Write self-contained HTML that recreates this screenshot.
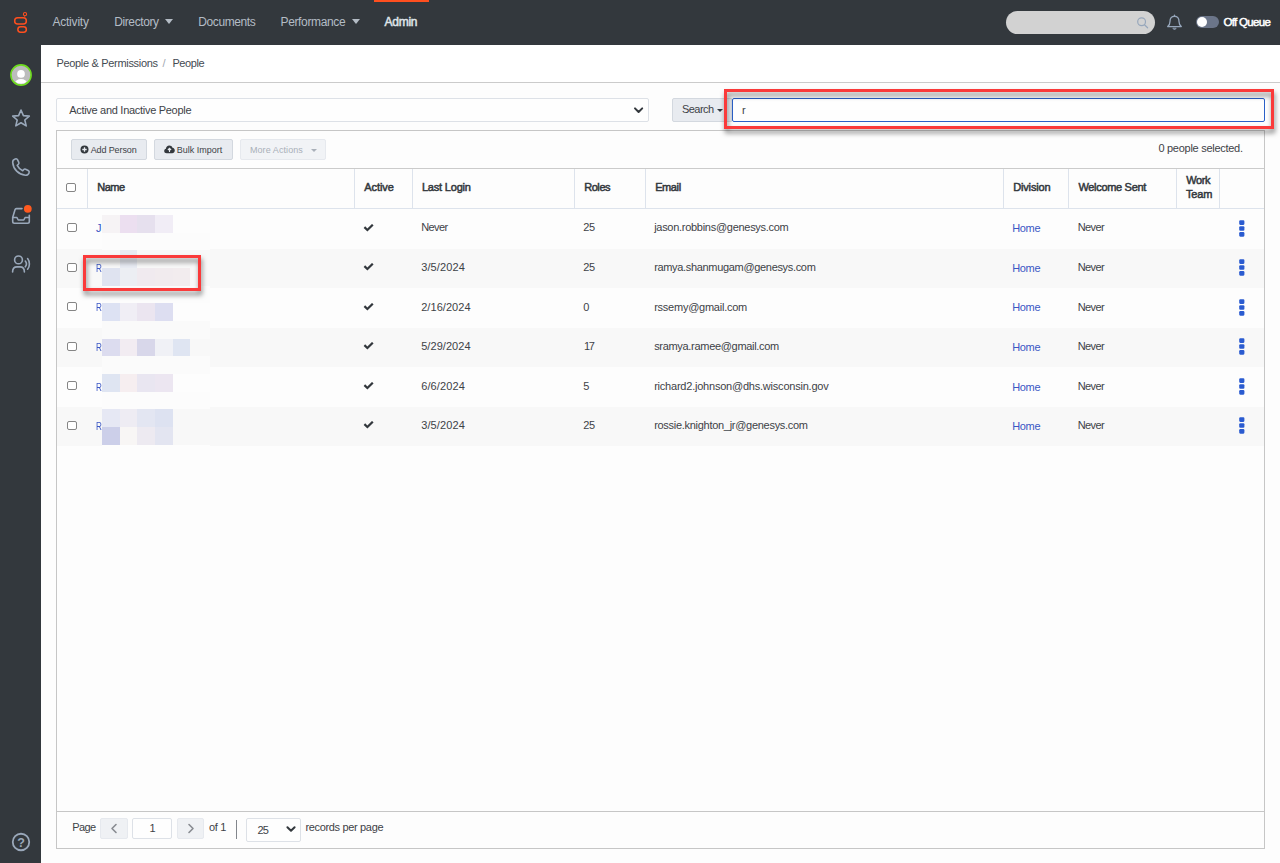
<!DOCTYPE html>
<html lang="en">
<head>
<meta charset="utf-8">
<title>People</title>
<style>
*{box-sizing:border-box;margin:0;padding:0}
html,body{width:1280px;height:863px;overflow:hidden;background:#fdfdfd;font-family:"Liberation Sans",Arial,sans-serif;color:#3d4247;font-size:12px}
.a{position:absolute}
.t{position:absolute;white-space:pre;line-height:14px;font-size:12px}
#side{left:0;top:0;width:41px;height:863px;background:#33383d}
#top{left:0;top:0;width:1280px;height:45px;background:#33383d}
#crumb{left:41px;top:45px;width:1239px;height:38px;background:#fff;border-bottom:1px solid #cbcbcb}
.caret{width:0;height:0;border-left:4.5px solid transparent;border-right:4.5px solid transparent;border-top:5px solid #b4bcc5}
.btn{background:#e8ebf0;border:1px solid #d3d8df;border-radius:2px}
.btn.dis{background:#f1f3f6;border-color:#e6e9ee}
.stripe{left:57px;width:1207px;height:39.5px;background:#f8f8f8}
.vl{width:1px;top:169px;height:39px;background:#dde3ec}
.cb{left:67px;width:9.6px;height:9.4px;border:1px solid #858585;border-radius:2px;background:#fff}
.px{position:absolute}
.red{border:3px solid #fa3a3a;filter:drop-shadow(1px 4px 2.5px rgba(0,0,0,.5))}
.dots{left:1239px;width:6px;height:17px}
.chk{left:363px;width:11px;height:9px}
</style>
</head>
<body>
<div id="top" class="a"></div>
<div id="side" class="a"></div>

<!-- active tab bar -->
<div class="a" style="left:374px;top:0;width:55px;height:2px;background:#ff4f1f"></div>
<div class="a caret" style="left:165px;top:19px"></div>
<div class="a caret" style="left:352px;top:19px"></div>

<!-- logo -->
<svg class="a" style="left:10px;top:9px" width="22" height="27" viewBox="10 9 22 27" fill="none" stroke="#ff4f1f" stroke-width="1.5">
<circle cx="25" cy="14.15" r="1.6" stroke-width="1.1"/>
<rect x="14.65" y="17.85" width="11.7" height="6.1" rx="3.05"/>
<rect x="17.85" y="26.75" width="8.5" height="5.4" rx="2.7"/>
<path d="M24.6 16 L24.8 17.2" stroke-width="0.7"/>
</svg>

<!-- avatar -->
<svg class="a" style="left:9px;top:63px" width="24" height="24" viewBox="0 0 24 24">
<defs><clipPath id="avc"><circle cx="12" cy="12" r="8.7"/></clipPath></defs>
<circle cx="12" cy="12" r="10.1" fill="#bcbcbc" stroke="#6fdc1f" stroke-width="1.6"/>
<g clip-path="url(#avc)" fill="#fff"><circle cx="12" cy="10.9" r="3.85"/><ellipse cx="12" cy="20.6" rx="6.3" ry="4.5"/></g>
</svg>

<!-- sidebar icons -->
<svg class="a" style="left:11px;top:108px" width="20" height="20" viewBox="11 108 20 20" fill="none" stroke="#9aa8ba" stroke-width="1.6" stroke-linejoin="round">
<path d="M21 110 L23.4 115.6 L29.3 116.1 L24.8 120 L26.2 125.9 L21 122.8 L15.8 125.9 L17.2 120 L12.7 116.1 L18.6 115.6 Z"/>
</svg>
<svg class="a" style="left:11px;top:157px" width="20" height="20" viewBox="11 157 20 20" fill="none" stroke="#9aa8ba" stroke-width="1.6" stroke-linecap="round" stroke-linejoin="round">
<path d="M15.2 158.9 C13.6 159.4 12.6 160.8 12.7 162.4 C13.2 169.2 18.6 174.6 25.4 175.2 C27 175.3 28.6 174.3 29.1 172.7 C29.4 171.8 29 170.9 28.2 170.5 L25.6 169.2 C24.9 168.9 24.1 169.1 23.6 169.7 L22.7 170.8 C20.4 169.7 18.4 167.7 17.2 165.3 L18.3 164.4 C18.9 163.9 19.1 163.1 18.8 162.4 L17.6 159.8 C17.2 158.9 16.1 158.6 15.2 158.9 Z"/>
</svg>
<svg class="a" style="left:11px;top:203px" width="24" height="23" viewBox="11 203 24 23" fill="none" stroke="#9aa8ba" stroke-width="1.6" stroke-linecap="round" stroke-linejoin="round">
<path d="M22 208.6 L16.4 208.6 C15.7 208.6 15.2 209 15 209.7 L12.7 217.4 L12.7 221.6 C12.7 222.6 13.4 223.3 14.4 223.3 L27.6 223.3 C28.6 223.3 29.3 222.6 29.3 221.6 L29.3 215.2"/>
<path d="M12.7 217.5 L16.9 217.5 L18.2 220 L23.8 220 L25.1 217.5 L29.3 217.5"/>
<circle cx="27.8" cy="208.8" r="3.9" fill="#ff5a1f" stroke="none"/>
</svg>
<svg class="a" style="left:11px;top:254px" width="21" height="20" viewBox="11 254 21 20" fill="none" stroke="#9aa8ba" stroke-width="1.6" stroke-linecap="round">
<circle cx="18.5" cy="259.9" r="3.9"/>
<path d="M12.6 272 C12.6 268.8 14.6 266.9 17 266.9 L20 266.9 C22.4 266.9 24.4 268.8 24.4 272"/>
<path d="M25.3 261 C26.6 262.6 26.6 265.2 25.3 266.8"/>
<path d="M27.6 258.6 C30 261.6 30 266.3 27.6 269.2"/>
</svg>
<svg class="a" style="left:11px;top:832px" width="20" height="20" viewBox="0 0 20 20">
<circle cx="10" cy="10" r="8.25" fill="none" stroke="#9aa8ba" stroke-width="1.8"/>
<text x="10" y="14.5" text-anchor="middle" font-family="Liberation Sans,Arial,sans-serif" font-weight="bold" font-size="12.5" fill="#9aa8ba">?</text>
</svg>

<!-- top right -->
<div class="a" style="left:1006px;top:11px;width:149px;height:23px;border-radius:12px;background:#d2d2d2"></div>
<svg class="a" style="left:1136px;top:16px" width="14" height="14" viewBox="1136 16 14 14" fill="none" stroke="#97a7bc" stroke-width="1.2" stroke-linecap="round">
<circle cx="1141.6" cy="21.8" r="3.9"/><path d="M1144.5 24.8 L1147.6 27.8"/>
</svg>
<svg class="a" style="left:1166px;top:13px" width="18" height="19" viewBox="1166 13 18 19" fill="none" stroke="#97a7bc" stroke-width="1.3" stroke-linecap="round" stroke-linejoin="round">
<path d="M1174.5 16.4 C1171.3 16.4 1170 18.9 1170 21.4 C1170 24.2 1169.2 25.3 1167.7 26.6 L1181.3 26.6 C1179.8 25.3 1179 24.2 1179 21.4 C1179 18.9 1177.7 16.4 1174.5 16.4 Z"/>
<path d="M1174.5 15.2 L1174.5 16.2"/><path d="M1172.9 28.5 A1.7 1.5 0 0 0 1176.1 28.5 Z" fill="#97a7bc" stroke-width="0.6"/>
</svg>
<div class="a" style="left:1196px;top:16px;width:23px;height:12px;border-radius:6px;background:#6b7589"></div>
<div class="a" style="left:1196.6px;top:16.9px;width:10.2px;height:10.2px;border-radius:6px;background:#fff"></div>

<!-- breadcrumb -->
<div id="crumb" class="a"></div>

<!-- filter row -->
<div class="a" style="left:56px;top:98px;width:593px;height:24px;border:1px solid #dde1e7;border-radius:2px;background:#fefefe"></div>
<svg class="a" style="left:632px;top:105px" width="14" height="10" viewBox="632 105 14 10" fill="none" stroke="#33383d" stroke-width="2" stroke-linecap="round" stroke-linejoin="round"><path d="M635 108.4 L638.6 112 L642.2 108.4"/></svg>
<div class="a btn" style="left:672px;top:98px;width:60px;height:24px;border-radius:2px 0 0 2px"></div>
<div class="a" style="left:717px;top:109px;width:0;height:0;border-left:3px solid transparent;border-right:3px solid transparent;border-top:3.5px solid #33383d"></div>
<div class="a" style="left:732px;top:98px;width:533px;height:24px;border:1px solid #2a60c8;border-radius:2px;background:#fefefe"></div>

<!-- panel -->
<div class="a" style="left:56px;top:130px;width:1209px;height:719px;border:1px solid #c6c6c6"></div>
<div class="a btn" style="left:71px;top:139px;width:76px;height:21px"></div>
<div class="a btn" style="left:154px;top:139px;width:79px;height:21px"></div>
<div class="a btn dis" style="left:240px;top:139px;width:86px;height:21px"></div>
<svg class="a" style="left:80px;top:145px" width="9" height="9" viewBox="0 0 9 9"><circle cx="4.5" cy="4.5" r="4" fill="#33383d"/><path d="M4.5 2.3V6.7M2.3 4.5H6.7" stroke="#e8ebf0" stroke-width="1.3"/></svg>
<svg class="a" style="left:164px;top:145px" width="11" height="9" viewBox="0 0 11 9"><path d="M2.7 8.3 C1.2 8.3 0.2 7.3 0.2 6 C0.2 4.9 0.9 4.1 1.9 3.8 C2 2 3.4 0.6 5.3 0.6 C6.8 0.6 8 1.5 8.5 2.8 C9.9 3 10.8 4.1 10.8 5.5 C10.8 7.1 9.6 8.3 8.1 8.3 Z" fill="#33383d"/><path d="M5.5 7V3.6M3.9 5L5.5 3.4L7.1 5" stroke="#e8ebf0" stroke-width="1.1" fill="none"/></svg>
<div class="a" style="left:310.5px;top:149px;width:0;height:0;border-left:3px solid transparent;border-right:3px solid transparent;border-top:3.5px solid #a9b0b9"></div>

<!-- header -->
<div class="a" style="left:57px;top:168px;width:1207px;height:1px;background:#cbcbcb"></div>
<div class="a" style="left:57px;top:208px;width:1207px;height:1px;background:#dde3ec"></div>
<div class="a vl" style="left:87px"></div>
<div class="a vl" style="left:354px"></div>
<div class="a vl" style="left:412px"></div>
<div class="a vl" style="left:574px"></div>
<div class="a vl" style="left:645px"></div>
<div class="a vl" style="left:1003px"></div>
<div class="a vl" style="left:1068px"></div>
<div class="a vl" style="left:1176px"></div>
<div class="a vl" style="left:1219px"></div>
<div class="a cb" style="left:66.2px;top:182.7px"></div>

<!-- rows -->
<div class="a stripe" style="top:248.5px"></div>
<div class="a stripe" style="top:327.5px"></div>
<div class="a stripe" style="top:406.5px"></div>
<div class="px" style="left:102px;top:232.66px;width:108px;height:17.66px;background:#fcfcfc"></div>
<div class="px" style="left:102px;top:285.64px;width:108px;height:17.66px;background:#fcfcfc"></div>
<div class="px" style="left:102px;top:320.96px;width:108px;height:17.66px;background:#fafafa"></div>
<div class="px" style="left:102px;top:356.28px;width:108px;height:17.66px;background:#fbfbfb"></div>
<div class="px" style="left:102px;top:391.60px;width:108px;height:17.66px;background:#fcfcfc"></div>
<div class="px" style="left:102px;top:444.58px;width:108px;height:17.66px;background:#fdfdfd"></div>
<div class="px" style="left:102px;top:215.00px;width:18px;height:17.66px;background:#f6f3f5"></div>
<div class="px" style="left:120px;top:215.00px;width:17px;height:17.66px;background:#ecdff0"></div>
<div class="px" style="left:137px;top:215.00px;width:18px;height:17.66px;background:#e6e0ee"></div>
<div class="px" style="left:155px;top:215.00px;width:18px;height:17.66px;background:#f1edf6"></div>
<div class="px" style="left:120px;top:250.32px;width:17px;height:17.66px;background:#e8ebf3"></div>
<div class="px" style="left:102px;top:267.98px;width:18px;height:17.66px;background:#dfe3f0"></div>
<div class="px" style="left:120px;top:267.98px;width:17px;height:17.66px;background:#eceef3"></div>
<div class="px" style="left:137px;top:267.98px;width:18px;height:17.66px;background:#f0eaef"></div>
<div class="px" style="left:155px;top:267.98px;width:18px;height:17.66px;background:#f1ebee"></div>
<div class="px" style="left:173px;top:267.98px;width:17px;height:17.66px;background:#f2ecee"></div>
<div class="px" style="left:102px;top:303.30px;width:18px;height:17.66px;background:#dde2f3"></div>
<div class="px" style="left:120px;top:303.30px;width:17px;height:17.66px;background:#f0eef5"></div>
<div class="px" style="left:137px;top:303.30px;width:18px;height:17.66px;background:#ebe5f0"></div>
<div class="px" style="left:155px;top:303.30px;width:18px;height:17.66px;background:#dddef1"></div>
<div class="px" style="left:102px;top:338.62px;width:18px;height:17.66px;background:#dcdcef"></div>
<div class="px" style="left:120px;top:338.62px;width:17px;height:17.66px;background:#f2ecf2"></div>
<div class="px" style="left:137px;top:338.62px;width:18px;height:17.66px;background:#d8d7ea"></div>
<div class="px" style="left:155px;top:338.62px;width:18px;height:17.66px;background:#f0f1f6"></div>
<div class="px" style="left:173px;top:338.62px;width:17px;height:17.66px;background:#dfe5f2"></div>
<div class="px" style="left:102px;top:373.94px;width:18px;height:17.66px;background:#dfe5f2"></div>
<div class="px" style="left:120px;top:373.94px;width:17px;height:17.66px;background:#f6eef0"></div>
<div class="px" style="left:137px;top:373.94px;width:18px;height:17.66px;background:#e9e6f1"></div>
<div class="px" style="left:155px;top:373.94px;width:18px;height:17.66px;background:#ece6f1"></div>
<div class="px" style="left:102px;top:409.26px;width:18px;height:17.66px;background:#e6e8f4"></div>
<div class="px" style="left:120px;top:409.26px;width:17px;height:17.66px;background:#eeecf3"></div>
<div class="px" style="left:137px;top:409.26px;width:18px;height:17.66px;background:#e3e6f2"></div>
<div class="px" style="left:155px;top:409.26px;width:18px;height:17.66px;background:#dde2f1"></div>
<div class="px" style="left:102px;top:426.92px;width:18px;height:17.66px;background:#cccfe9"></div>
<div class="px" style="left:120px;top:426.92px;width:17px;height:17.66px;background:#f8f6f5"></div>
<div class="px" style="left:137px;top:426.92px;width:18px;height:17.66px;background:#edeaf1"></div>
<div class="px" style="left:155px;top:426.92px;width:18px;height:17.66px;background:#e3e5f1"></div>
<div class="a cb" style="top:223.0px"></div>
<svg class="a chk" style="top:223.5px" viewBox="0 0 11 9"><path d="M1.4 3.1 L4.4 6.0 L9.8 0.7" fill="none" stroke="#33383d" stroke-width="2.2"/></svg>
<svg class="a dots" style="top:219.8px" viewBox="0 0 6 17" fill="#2a5bd0"><rect x="0.2" y="0.3" width="5.2" height="4.6" rx="1.1"/><rect x="0.2" y="6.2" width="5.2" height="4.6" rx="1.1"/><rect x="0.2" y="12.1" width="5.2" height="4.6" rx="1.1"/></svg>
<div class="a cb" style="top:262.5px"></div>
<svg class="a chk" style="top:263.0px" viewBox="0 0 11 9"><path d="M1.4 3.1 L4.4 6.0 L9.8 0.7" fill="none" stroke="#33383d" stroke-width="2.2"/></svg>
<svg class="a dots" style="top:259.3px" viewBox="0 0 6 17" fill="#2a5bd0"><rect x="0.2" y="0.3" width="5.2" height="4.6" rx="1.1"/><rect x="0.2" y="6.2" width="5.2" height="4.6" rx="1.1"/><rect x="0.2" y="12.1" width="5.2" height="4.6" rx="1.1"/></svg>
<div class="a cb" style="top:302.0px"></div>
<svg class="a chk" style="top:302.5px" viewBox="0 0 11 9"><path d="M1.4 3.1 L4.4 6.0 L9.8 0.7" fill="none" stroke="#33383d" stroke-width="2.2"/></svg>
<svg class="a dots" style="top:298.8px" viewBox="0 0 6 17" fill="#2a5bd0"><rect x="0.2" y="0.3" width="5.2" height="4.6" rx="1.1"/><rect x="0.2" y="6.2" width="5.2" height="4.6" rx="1.1"/><rect x="0.2" y="12.1" width="5.2" height="4.6" rx="1.1"/></svg>
<div class="a cb" style="top:341.5px"></div>
<svg class="a chk" style="top:342.0px" viewBox="0 0 11 9"><path d="M1.4 3.1 L4.4 6.0 L9.8 0.7" fill="none" stroke="#33383d" stroke-width="2.2"/></svg>
<svg class="a dots" style="top:338.3px" viewBox="0 0 6 17" fill="#2a5bd0"><rect x="0.2" y="0.3" width="5.2" height="4.6" rx="1.1"/><rect x="0.2" y="6.2" width="5.2" height="4.6" rx="1.1"/><rect x="0.2" y="12.1" width="5.2" height="4.6" rx="1.1"/></svg>
<div class="a cb" style="top:381.0px"></div>
<svg class="a chk" style="top:381.5px" viewBox="0 0 11 9"><path d="M1.4 3.1 L4.4 6.0 L9.8 0.7" fill="none" stroke="#33383d" stroke-width="2.2"/></svg>
<svg class="a dots" style="top:377.8px" viewBox="0 0 6 17" fill="#2a5bd0"><rect x="0.2" y="0.3" width="5.2" height="4.6" rx="1.1"/><rect x="0.2" y="6.2" width="5.2" height="4.6" rx="1.1"/><rect x="0.2" y="12.1" width="5.2" height="4.6" rx="1.1"/></svg>
<div class="a cb" style="top:420.5px"></div>
<svg class="a chk" style="top:421.0px" viewBox="0 0 11 9"><path d="M1.4 3.1 L4.4 6.0 L9.8 0.7" fill="none" stroke="#33383d" stroke-width="2.2"/></svg>
<svg class="a dots" style="top:417.3px" viewBox="0 0 6 17" fill="#2a5bd0"><rect x="0.2" y="0.3" width="5.2" height="4.6" rx="1.1"/><rect x="0.2" y="6.2" width="5.2" height="4.6" rx="1.1"/><rect x="0.2" y="12.1" width="5.2" height="4.6" rx="1.1"/></svg>

<!-- footer -->
<div class="a" style="left:57px;top:811px;width:1207px;height:1px;background:#c6c6c6"></div>
<div class="a btn" style="left:100px;top:818px;width:28px;height:21px;background:#eff1f4;border-color:#e6e9ee"></div>
<div class="a" style="left:132px;top:818px;width:40px;height:21px;border:1px solid #dde1e7;border-radius:2px;background:#fefefe"></div>
<div class="a btn" style="left:177px;top:818px;width:27px;height:21px;background:#eff1f4;border-color:#e6e9ee"></div>
<svg class="a" style="left:109px;top:823px" width="10" height="11" viewBox="0 0 10 11" fill="none" stroke="#888b91" stroke-width="1.6" stroke-linecap="round" stroke-linejoin="round"><path d="M7 1.5 L3 5.5 L7 9.5"/></svg>
<svg class="a" style="left:186px;top:823px" width="10" height="11" viewBox="0 0 10 11" fill="none" stroke="#888b91" stroke-width="1.6" stroke-linecap="round" stroke-linejoin="round"><path d="M3 1.5 L7 5.5 L3 9.5"/></svg>
<div class="a" style="left:236px;top:820px;width:1px;height:19px;background:#82868c"></div>
<div class="a" style="left:246px;top:818px;width:55px;height:23.5px;border:1px solid #dde1e7;border-radius:2px;background:#fefefe"></div>
<svg class="a" style="left:284px;top:824px" width="14" height="10" viewBox="0 0 14 10" fill="none" stroke="#33383d" stroke-width="2" stroke-linecap="round" stroke-linejoin="round"><path d="M3.4 3.2 L7 6.8 L10.6 3.2"/></svg>

<div class="t" style="left:52.40px;top:14.50px;color:#b4bcc5;letter-spacing:-0.202px;">Activity</div>
<div class="t" style="left:114.20px;top:14.50px;color:#b4bcc5;letter-spacing:-0.390px;">Directory</div>
<div class="t" style="left:198.30px;top:14.50px;color:#b4bcc5;letter-spacing:-0.412px;">Documents</div>
<div class="t" style="left:280.50px;top:14.50px;color:#b4bcc5;letter-spacing:-0.353px;">Performance</div>
<div class="t" style="left:384.60px;top:14.50px;-webkit-text-stroke:0.5px;color:#dfe3e8;letter-spacing:-0.270px;">Admin</div>
<div class="t" style="left:1223.50px;top:14.80px;font-size:11.5px;-webkit-text-stroke:0.5px;color:#ffffff;letter-spacing:-0.689px;">Off Queue</div>
<div class="t" style="left:56.40px;top:55.50px;font-size:11px;color:#444a52;letter-spacing:-0.313px;">People &amp; Permissions</div>
<div class="t" style="left:162.40px;top:55.50px;font-size:11px;color:#a0a7b0;">/</div>
<div class="t" style="left:172.40px;top:55.50px;font-size:11px;color:#444a52;letter-spacing:-0.412px;">People</div>
<div class="t" style="left:69.15px;top:102.50px;font-size:11px;letter-spacing:-0.290px;">Active and Inactive People</div>
<div class="t" style="left:681.90px;top:102.00px;font-size:11px;letter-spacing:-0.520px;">Search</div>
<div class="t" style="left:741.90px;top:103.10px;font-size:11px;">r</div>
<div class="t" style="left:90.65px;top:143.20px;font-size:9px;letter-spacing:-0.109px;">Add Person</div>
<div class="t" style="left:176.65px;top:143.20px;font-size:9px;">Bulk Import</div>
<div class="t" style="left:249.90px;top:143.20px;font-size:9px;color:#a9b0b9;letter-spacing:0.084px;">More Actions</div>
<div class="t" style="left:1158.40px;top:140.50px;font-size:11px;letter-spacing:-0.274px;">0 people selected.</div>
<div class="t" style="left:97.15px;top:179.50px;font-size:11px;-webkit-text-stroke:0.5px;color:#33383d;letter-spacing:-0.455px;">Name</div>
<div class="t" style="left:364.15px;top:179.50px;font-size:11px;-webkit-text-stroke:0.5px;color:#33383d;letter-spacing:-0.040px;">Active</div>
<div class="t" style="left:421.90px;top:179.50px;font-size:11px;-webkit-text-stroke:0.5px;color:#33383d;letter-spacing:-0.186px;">Last Login</div>
<div class="t" style="left:584.15px;top:179.50px;font-size:11px;-webkit-text-stroke:0.5px;color:#33383d;letter-spacing:-0.417px;">Roles</div>
<div class="t" style="left:655.15px;top:179.50px;font-size:11px;-webkit-text-stroke:0.5px;color:#33383d;letter-spacing:-0.392px;">Email</div>
<div class="t" style="left:1013.15px;top:179.50px;font-size:11px;-webkit-text-stroke:0.5px;color:#33383d;letter-spacing:-0.135px;">Division</div>
<div class="t" style="left:1078.40px;top:179.50px;font-size:11px;-webkit-text-stroke:0.5px;color:#33383d;letter-spacing:-0.311px;">Welcome Sent</div>
<div class="t" style="left:1186.15px;top:172.50px;font-size:11px;-webkit-text-stroke:0.5px;color:#33383d;letter-spacing:-0.348px;">Work</div>
<div class="t" style="left:1185.90px;top:186.75px;font-size:11px;-webkit-text-stroke:0.5px;color:#33383d;letter-spacing:-0.116px;">Team</div>
<div class="t" style="left:96.10px;top:220.50px;font-size:11px;color:#3a56c4;">J</div>
<div class="t" style="left:421.15px;top:219.50px;font-size:11px;letter-spacing:-0.576px;">Never</div>
<div class="t" style="left:583.15px;top:219.50px;font-size:11px;letter-spacing:-0.333px;">25</div>
<div class="t" style="left:654.15px;top:219.50px;font-size:11px;letter-spacing:-0.282px;">jason.robbins@genesys.com</div>
<div class="t" style="left:1012.15px;top:220.50px;font-size:11px;color:#3a56c4;letter-spacing:-0.312px;">Home</div>
<div class="t" style="left:1077.65px;top:219.50px;font-size:11px;letter-spacing:-0.576px;">Never</div>
<div class="t" style="left:96.40px;top:260.50px;font-size:11px;color:#3a56c4;transform:scaleX(0.74);transform-origin:0 0;">R</div>
<div class="t" style="left:421.15px;top:259.50px;font-size:11px;letter-spacing:0.123px;">3/5/2024</div>
<div class="t" style="left:583.15px;top:259.50px;font-size:11px;letter-spacing:-0.333px;">25</div>
<div class="t" style="left:654.15px;top:259.50px;font-size:11px;letter-spacing:-0.325px;">ramya.shanmugam@genesys.com</div>
<div class="t" style="left:1012.15px;top:260.50px;font-size:11px;color:#3a56c4;letter-spacing:-0.312px;">Home</div>
<div class="t" style="left:1077.65px;top:259.50px;font-size:11px;letter-spacing:-0.576px;">Never</div>
<div class="t" style="left:96.40px;top:299.50px;font-size:11px;color:#3a56c4;transform:scaleX(0.74);transform-origin:0 0;">R</div>
<div class="t" style="left:421.15px;top:299.50px;font-size:11px;letter-spacing:0.066px;">2/16/2024</div>
<div class="t" style="left:583.15px;top:299.50px;font-size:11px;">0</div>
<div class="t" style="left:654.15px;top:299.50px;font-size:11px;letter-spacing:-0.241px;">rssemy@gmail.com</div>
<div class="t" style="left:1012.15px;top:299.50px;font-size:11px;color:#3a56c4;letter-spacing:-0.312px;">Home</div>
<div class="t" style="left:1077.65px;top:299.50px;font-size:11px;letter-spacing:-0.576px;">Never</div>
<div class="t" style="left:96.40px;top:339.50px;font-size:11px;color:#3a56c4;transform:scaleX(0.74);transform-origin:0 0;">R</div>
<div class="t" style="left:421.15px;top:338.50px;font-size:11px;letter-spacing:0.066px;">5/29/2024</div>
<div class="t" style="left:583.90px;top:338.50px;font-size:11px;letter-spacing:-1.167px;">17</div>
<div class="t" style="left:654.15px;top:338.50px;font-size:11px;letter-spacing:-0.307px;">sramya.ramee@gmail.com</div>
<div class="t" style="left:1012.15px;top:339.50px;font-size:11px;color:#3a56c4;letter-spacing:-0.312px;">Home</div>
<div class="t" style="left:1077.65px;top:338.50px;font-size:11px;letter-spacing:-0.576px;">Never</div>
<div class="t" style="left:96.40px;top:379.50px;font-size:11px;color:#3a56c4;transform:scaleX(0.74);transform-origin:0 0;">R</div>
<div class="t" style="left:421.15px;top:378.50px;font-size:11px;letter-spacing:0.123px;">6/6/2024</div>
<div class="t" style="left:583.15px;top:378.50px;font-size:11px;">5</div>
<div class="t" style="left:654.15px;top:378.50px;font-size:11px;letter-spacing:-0.217px;">richard2.johnson@dhs.wisconsin.gov</div>
<div class="t" style="left:1012.15px;top:379.50px;font-size:11px;color:#3a56c4;letter-spacing:-0.312px;">Home</div>
<div class="t" style="left:1077.65px;top:378.50px;font-size:11px;letter-spacing:-0.576px;">Never</div>
<div class="t" style="left:96.40px;top:418.50px;font-size:11px;color:#3a56c4;transform:scaleX(0.74);transform-origin:0 0;">R</div>
<div class="t" style="left:421.15px;top:417.50px;font-size:11px;letter-spacing:0.123px;">3/5/2024</div>
<div class="t" style="left:583.15px;top:417.50px;font-size:11px;letter-spacing:-0.333px;">25</div>
<div class="t" style="left:654.15px;top:417.50px;font-size:11px;letter-spacing:-0.286px;">rossie.knighton_jr@genesys.com</div>
<div class="t" style="left:1012.15px;top:418.50px;font-size:11px;color:#3a56c4;letter-spacing:-0.312px;">Home</div>
<div class="t" style="left:1077.65px;top:417.50px;font-size:11px;letter-spacing:-0.576px;">Never</div>
<div class="t" style="left:72.15px;top:820.00px;font-size:11px;letter-spacing:-0.558px;">Page</div>
<div class="t" style="left:149.50px;top:821.00px;font-size:11px;">1</div>
<div class="t" style="left:208.90px;top:820.00px;font-size:11px;letter-spacing:-0.317px;">of 1</div>
<div class="t" style="left:257.40px;top:822.50px;font-size:11px;letter-spacing:-0.667px;">25</div>
<div class="t" style="left:305.40px;top:820.00px;font-size:11px;letter-spacing:-0.334px;">records per page</div>

<!-- annotation rectangles -->
<div class="a red" style="left:724px;top:89px;width:550px;height:40px"></div>
<div class="a red" style="left:83px;top:255px;width:118px;height:36px"></div>
</body>
</html>
